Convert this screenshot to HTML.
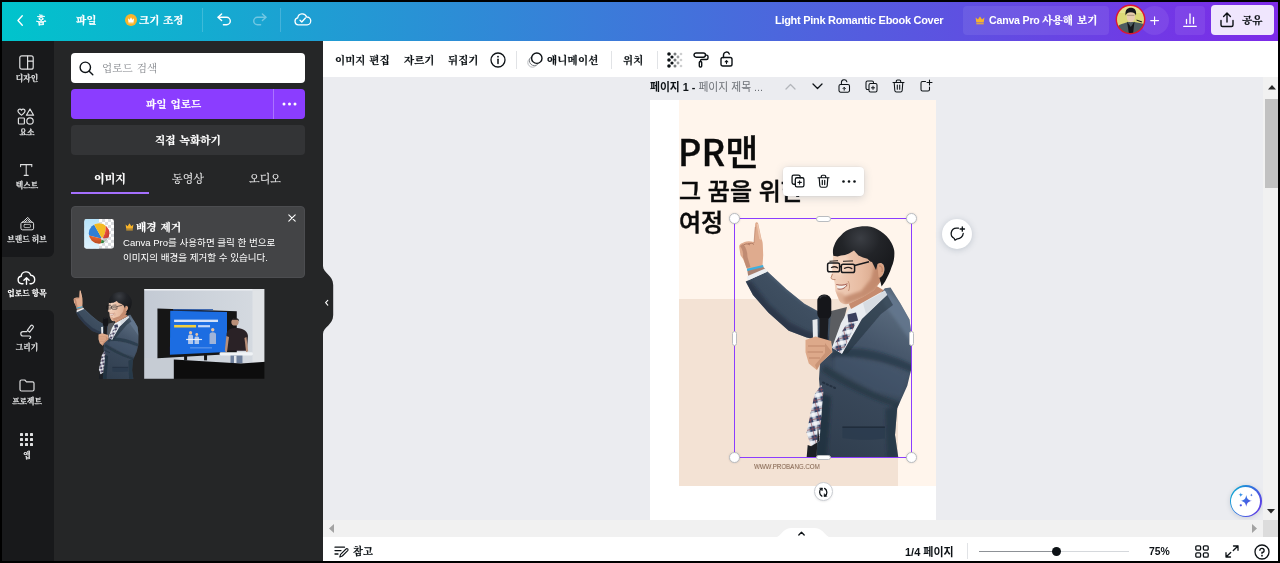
<!DOCTYPE html>
<html lang="ko">
<head>
<meta charset="utf-8">
<title>Light Pink Romantic Ebook Cover</title>
<style>
*{box-sizing:border-box;margin:0;padding:0}
html,body{width:1280px;height:563px;overflow:hidden;background:#000}
body{font-family:"Liberation Sans","Noto Sans CJK KR",sans-serif;position:relative;color:#0d1216}
.a{position:absolute}
.ser{font-family:"Liberation Sans","Noto Serif CJK SC","Noto Sans CJK KR",serif;word-spacing:1px;-webkit-text-stroke:.22px}
.nb{-webkit-text-stroke:0}
.rl{word-spacing:0!important}
.sans{font-family:"Liberation Sans","Noto Sans CJK KR",sans-serif}
#app{position:absolute;left:0;top:0;width:1280px;height:563px;background:#ebecf0;overflow:hidden}
.t,.rl{will-change:transform}
.t{position:absolute;white-space:nowrap;line-height:16px;height:16px}
svg{position:absolute;overflow:visible}
/* header */
#hdr{left:2px;top:2px;width:1276px;height:39px;background:linear-gradient(90deg,#00c4cc,#7d2ae8)}
#hdr .t{color:#fff;font-weight:700;font-size:10.6px}
.hdiv{position:absolute;top:6px;width:1px;height:24px;background:rgba(255,255,255,.18)}
/* rail */
#rail{left:2px;top:41px;width:51.500px;height:520px;background:#252627}
.rsec{position:absolute;left:0;width:51.500px;background:#18191b}
.rl{position:absolute;left:-11.3px;width:72px;text-align:center;color:#dfe0e1;font-size:7.7px;font-weight:700;line-height:10px;height:10px;white-space:nowrap}
/* panel */
#panel{left:53.500px;top:41px;width:269.500px;height:520px;background:#252627}
/* toolbar */
#tbar{left:323px;top:41px;width:955px;height:36px;background:#fff}
#tbar .t{font-size:10.5px;font-weight:700;color:#0d1216}
.tdiv{position:absolute;top:10px;width:1px;height:18px;background:#e1e3e6}
/* footer */
#foot{left:323px;top:537px;width:955px;height:24px;background:#fff}
</style>
</head>
<body>
<div id="app">
<svg width="0" height="0" style="left:0;top:0">
<defs>
<linearGradient id="jk" x1=".3" y1="0" x2="0" y2="1"><stop offset="0" stop-color="#57687b"/><stop offset=".22" stop-color="#46566a"/><stop offset=".5" stop-color="#39485a"/><stop offset="1" stop-color="#2f3d4d"/></linearGradient><linearGradient id="jk2" x1="1" y1="0" x2="0" y2="1"><stop offset="0" stop-color="#48596c"/><stop offset="1" stop-color="#324152"/></linearGradient>
<linearGradient id="sk" x1="0" y1="0" x2="1" y2="0"><stop offset="0" stop-color="#f3d3bf"/><stop offset=".6" stop-color="#e7bba1"/><stop offset="1" stop-color="#d3a083"/></linearGradient>
<radialGradient id="hr" cx=".45" cy=".2" r=".7"><stop offset="0" stop-color="#3b3e44"/><stop offset=".45" stop-color="#222428"/><stop offset="1" stop-color="#17181b"/></radialGradient>
<filter id="bl" x="-20%" y="-20%" width="140%" height="140%"><feGaussianBlur stdDeviation="1.6"/></filter>
<filter id="bs" x="-20%" y="-20%" width="140%" height="140%"><feGaussianBlur stdDeviation=".7"/></filter>
<pattern id="plaid" width="9" height="9" patternUnits="userSpaceOnUse" patternTransform="rotate(-14)"><rect width="9" height="9" fill="#36466a"/><rect x="0" y="0" width="9" height="3.800" fill="#dfe4ec"/><rect x="0" y="0" width="3.600" height="9" fill="#cdd4df" opacity=".9"/><rect x="0" y="0" width="3.600" height="3.800" fill="#f1f3f7"/><rect x="6" y="0" width=".8" height="9" fill="#8d4a55" opacity=".75"/><rect x="0" y="6.200" width="9" height=".8" fill="#8d4a55" opacity=".75"/></pattern>
<clipPath id="cB"><path d="M149.900 69.200 155.500 68.500 165.600 84.800 174.500 100.500 177 120 176.500 149 172.300 166.800 162.200 189.200 160 216 163.400 239H81.700L82.800 204.800 85 171.300 84 160 85 144.400 97.300 133.200 96 122 100.700 96 121 101.600z"/></clipPath>
<clipPath id="cA"><path d="M32.400 52.500 51.500 70.300 69.400 84.800 84 92.700 100 96 96 124 71.600 118.400 53.700 111.700 33.500 93.800 17.900 75.900 10.700 62.400z"/></clipPath>
<clipPath id="cF"><path d="M99 30C97.500 40 97.800 48 97 54L95.800 58.500C95.600 60 97.500 60.800 99 61L99.700 64 100.400 72 104 81C106 85 110 86 114 84.800L128 78 138.700 71.400 146 62 147.500 50 142 36 120 24 104 28z"/></clipPath>
<symbol id="man" viewBox="0 0 177 239" overflow="visible">
  <!-- raised arm sleeve -->
  <path d="M32.400 52.500 51.500 70.300 69.400 84.800 84 92.700 100 96 96 124 71.600 118.400 53.700 111.700 33.500 93.800 17.900 75.900 10.700 62.400z" fill="url(#jk2)"/>
  <g clip-path="url(#cA)" filter="url(#bl)">
    <path d="M8 64 30 94 54 114 74 122 96 128V118L72 112 54 103 34 85 16 62z" fill="#1e2c3b" opacity=".55"/>
    <path d="M30 52 52 72 70 86 84 93 84 88 68 79 50 64 36 50z" fill="#5b7088" opacity=".5"/>
  </g>
  <!-- cuff -->
  <path d="M12.200 50.500 27.500 47 30.200 50 13.300 58z" fill="#a88272"/>
  <path d="M12 57.200 30.300 49.400 32.300 52.800 12.600 61.500z" fill="#eceff2"/>
  <!-- hand + finger -->
  <path d="M20.200 5C20.300 2.500 22.900 2.500 23.300 5L26.500 20C27.500 22 27.800 24 27.800 26L28.200 36 27.500 47 12.200 50.500 8.200 40.300 5.500 36.300 4.200 28C4 26 5.500 24.500 7.500 24L9.500 23C12 22 15 22 19 23z" fill="#dfab8e"/>
  <g filter="url(#bs)"><path d="M5 27C7.500 30 8.500 34 8 38L11.500 49 15.500 48 12.500 38C12.500 33 11 28 8 25z" fill="#b47d66" opacity=".7"/><path d="M21.600 5 24.300 20 26.300 21 23 5z" fill="#f0cbb3" opacity=".8"/><path d="M8.500 26C11 24.500 13 24.500 15 26M13 25C15.500 23.800 17.500 24 19 25.500" fill="none" stroke="#a9735c" stroke-width=".9"/><path d="M19 24 20.300 8" stroke="#b47d66" stroke-width="1" fill="none" opacity=".6"/></g>
  <path d="M11.800 49.700 28 45.900 28.500 48 12.400 52z" fill="#3eb0e0"/>
  <!-- body jacket -->
  <path d="M149.900 69.200 155.500 68.500 165.600 84.800 174.500 100.500 177 120 176.500 149 172.300 166.800 162.200 189.200 160 216 163.400 239H81.700L82.800 204.800 85 171.300 84 160 85 144.400 97.300 133.200 96 122 100.700 96 121 101.600z" fill="url(#jk)"/>
  <g clip-path="url(#cB)" filter="url(#bl)">
    <path d="M150 70 168 86 177 104V124L160 100 148 84z" fill="#6a7f96" opacity=".6"/>
    <path d="M97 133C118 124 150 132 178 146V154C150 142 118 134 96 140z" fill="#1c2937" opacity=".5"/>
    <path d="M86 152C108 168 140 182 166 190L168 184C142 176 110 160 90 146z" fill="#1d2a38" opacity=".45"/>
    <path d="M100 136 150 146 172 156 166 178 140 172 100 150z" fill="#465b71" opacity=".4"/>
    <path d="M82 172 96 178 92 239H80z" fill="#1e2c3b" opacity=".7"/>
    <path d="M150 190 164 186 162 239H152z" fill="#223040" opacity=".6"/>
  </g>
  <path d="M107.400 208.200H149.900V219.500C135 221.500 120 221 107.400 219z" fill="#2a3b4d" opacity=".8"/>
  <path d="M107.400 208.200H149.900" stroke="#1c2836" stroke-width="1.300" fill="none"/>
  <path d="M88 163.500 100 169" stroke="#1c2836" stroke-width="2" stroke-linecap="round" stroke-dasharray="1.500 2.500" fill="none" opacity=".7"/>
  <!-- inner dark grey -->
  <path d="M96 92 112 88 108 104 98 126 94 121z" fill="#5b5d61"/>
  <!-- shirt + collar -->
  <path d="M114 90 149.900 71.400 152.200 75.900 127 100 107 135 97 128.500 106 104z" fill="#e9ecf0"/>
  <path d="M128 84 150 72 152 76 131 95z" fill="#cfd5dc" opacity=".7"/>
  <!-- neck -->
  <path d="M112 80 140 66 149 71.500 116 90z" fill="#c68b6e"/>
  <!-- tie -->
  <path d="M112.500 95.500 121 93.500 123.200 101.500 113.500 104.500z" fill="#3a3f5c"/>
  <path d="M112.500 103.500 121.500 102.500 107 134.500 97 129z" fill="url(#plaid)"/>
  <path d="M86.100 165.700 88.400 171.300 84.500 222 76.100 227.200 71.600 213.800 79.400 175.700z" fill="url(#plaid)"/>
  <path d="M72.700 226 76.100 227.200 84.500 222 82.800 205 81.700 239H71.600z" fill="#1b1f25"/>
  <g clip-path="url(#cB)" filter="url(#bs)"><path d="M152.200 75.900 127 100 107 135 113 134 146 95 158 86z" fill="#222e3a" opacity=".55"/></g>
  <!-- mic -->
  <path d="M77.500 101 82.500 100 82.800 119.500 78 119z" fill="#e6e9ec"/>
  <rect x="82.300" y="75.500" width="14" height="25.500" rx="6.500" fill="#15161a"/>
  <path d="M84.500 99H93.500L92.500 122H84.500z" fill="#1b1c20"/>
  <path d="M85 79C86 77 89 76.500 91 77" stroke="#3a3c42" stroke-width="1.200" fill="none" stroke-linecap="round"/>
  <!-- hand holding mic -->
  <path d="M70.500 121 80.500 117.500 96.200 122 97.300 133.200 85 144.400 81.700 151.100 73.800 144.400 70.500 133.200z" fill="#dda98a"/>
  <g filter="url(#bs)"><path d="M73 127H90M72.500 133H88M74 139H85" stroke="#b47c62" stroke-width="1.100" fill="none" opacity=".75"/><path d="M90 124 97 133 86 144 82 151 80 146 90 134z" fill="#c18a6e" opacity=".7"/></g>
  <!-- face -->
  <path d="M99 30C97.500 40 97.800 48 97 54L95.800 58.500C95.600 60 97.500 60.800 99 61L99.700 64 100.400 72 104 81C106 85 110 86 114 84.800L128 78 138.700 71.400 146 62 147.500 50 142 36 120 24 104 28z" fill="url(#sk)"/>
  <g clip-path="url(#cF)" filter="url(#bl)">
    <path d="M110 86 130 78 140 71 147 61 148 48 140 44 136 60 126 72 108 78z" fill="#bd8366" opacity=".8"/>
    <path d="M100 38 112 36 116 50 104 58 98 54z" fill="#f6d7c2" opacity=".8"/>
    <path d="M99 72 108 74 114 84 104 84z" fill="#d49e82" opacity=".6"/>
  </g>
  <path d="M142.300 45C146 42.500 149.800 45 149.400 50.500 149 55.500 146 59 143.500 58z" fill="#d9a283"/>
  <path d="M144 47C146.500 46.500 147.800 49 147 53" stroke="#b57c62" stroke-width=".9" fill="none"/>
  <path d="M97.500 55 96 58.800C96 60 98 60.800 100.500 60.600" stroke="#b98267" stroke-width=".9" fill="none"/>
  <path d="M101.800 66C105 67 109 67 112 65.500 110.500 69 106 70.500 102.500 69.500z" fill="#f4f1ed"/>
  <path d="M101.300 65.500C105 66.500 109 66.300 112.500 64.800M102.500 69.800C106 71 110 69.500 112 66" fill="none" stroke="#9a5148" stroke-width=".9"/>
  <path d="M113 62C115 65 115 69 113.500 72" stroke="#c48d72" stroke-width=".9" fill="none"/>
  <!-- eyes -->
  <path d="M96.500 48.500C98.500 47.500 101 47.700 102.500 48.800M109.500 49.300C112 48 115 48.300 116.800 49.600" stroke="#2a211f" stroke-width="1.300" fill="none" stroke-linecap="round"/>
  <!-- hair -->
  <path d="M98.300 36.800C97.500 32 98 29 99 26.900 100.500 22 103 19 105.400 16.900 109 12.500 113 10.500 118.200 9.100 123 7.500 128 7 132.400 7.300 137 7.800 141.500 9.500 145.200 12 150 15 154 19 156.500 24 158.500 28 159.500 31 159.400 34 159.500 39 158.500 44 156.500 48.200 155 53 152.500 58 150.100 62.400L146.600 67.400 144.500 59C147 58 149.500 54 149.400 50 149.500 45 146 42.500 142.500 45L141 51 137 43 135.200 42.500 132.400 39.700 128 38.500 123.500 36.500 119 31.500 114 34.500 110 36 106 36.500 102.500 37.500z" fill="url(#hr)"/>
  <!-- glasses -->
  <rect x="92.600" y="44" width="12" height="8.800" rx="1.800" fill="none" stroke="#17181b" stroke-width="1.500"/>
  <rect x="106.300" y="45.200" width="13.300" height="8.300" rx="1.800" fill="none" stroke="#17181b" stroke-width="1.500"/>
  <path d="M104.600 47.500 106.300 47.800M119.600 46.500 134 42.800" stroke="#17181b" stroke-width="1.500" fill="none"/>
  <path d="M94.500 42.300 103 41.600M108 42.300 118 41.800" stroke="#2a2422" stroke-width="1.200" fill="none" opacity=".8"/>
</symbol>
</defs>
</svg>

<div id="hdr" class="a">
  <svg style="left:15px;top:12.500px" width="6.500" height="11.400" viewBox="0 0 8 14" fill="none" stroke="#fff" stroke-width="1.700" stroke-linecap="round" stroke-linejoin="round"><path d="M6.5 1 1.2 6.8 6.5 12.6"/></svg>
  <div class="t ser" style="left:34px;top:10px">홈</div>
  <div class="t ser" style="left:74px;top:10px">파일</div>
  <svg style="left:122.800px;top:12px" width="12" height="12" viewBox="0 0 13 13"><circle cx="6.5" cy="6.5" r="6.5" fill="#f9b42a"/><path d="M3.2 4.6 5 6.2 6.5 3.6 8 6.2 9.8 4.6 9.3 8.6H3.7z" fill="#fff"/><rect x="3.7" y="9.1" width="5.6" height=".9" fill="#fff"/></svg>
  <div class="t ser" style="left:137.400px;top:10px;word-spacing:.5px">크기 조정</div>
  <div class="hdiv" style="left:200px"></div>
  <svg style="left:215px;top:11px" width="15" height="13" viewBox="0 0 15 13" fill="none" stroke="#fff" stroke-width="1.4" stroke-linecap="round" stroke-linejoin="round"><path d="M4.6 1 1 4.3 4.6 7.6"/><path d="M1.3 4.3H9.6a3.7 3.7 0 0 1 0 7.4H6.4"/></svg>
  <svg style="left:250px;top:11px;opacity:.38" width="15" height="13" viewBox="0 0 15 13" fill="none" stroke="#fff" stroke-width="1.4" stroke-linecap="round" stroke-linejoin="round"><path d="M10.4 1 14 4.3 10.4 7.6"/><path d="M13.7 4.3H5.4a3.7 3.7 0 0 0 0 7.4H8.6"/></svg>
  <div class="hdiv" style="left:278px"></div>
  <svg style="left:291.700px;top:10.200px" width="17" height="14" viewBox="0 0 17 14" fill="none" stroke="#fff" stroke-width="1.3" stroke-linecap="round" stroke-linejoin="round"><path d="M4.3 12.8a3.5 3.5 0 0 1-.6-6.9 4.6 4.6 0 0 1 8.9-.9 3.9 3.9 0 0 1 .5 7.8z"/><path d="M6 8.2 7.8 10 11.4 6"/></svg>
  <div class="t sans" style="left:773px;top:10px;font-size:11px;letter-spacing:-.29px">Light Pink Romantic Ebook Cover</div>
  <div class="a" style="left:961px;top:4px;width:146px;height:29px;border-radius:4px;background:rgba(255,255,255,.08)"></div>
  <svg style="left:973px;top:14px" width="10" height="9" viewBox="0 0 10 9"><path d="M.6 1.6 2.9 3.6 5 .4 7.100 3.600 9.4 1.600 8.700 6.600H1.300z" fill="#f9b42a"/><rect x="1.300" y="7.200" width="7.400" height="1.100" fill="#f9b42a"/></svg>
  <div class="t" style="left:987px;top:10px"><span class="sans" style="letter-spacing:-.2px">Canva Pro </span><span class="ser">사용해 보기</span></div>
  <div class="a" style="left:1138px;top:4px;width:29px;height:29px;border-radius:50%;background:rgba(255,255,255,.08)"></div>
  <svg style="left:1148px;top:13.700px" width="9.200" height="9.200" viewBox="0 0 11 11" stroke="#fff" stroke-width="1.3" stroke-linecap="round"><path d="M5.500 .8V10.200M.8 5.500H10.200"/></svg>
  <svg style="left:1112.800px;top:2.400px" width="31" height="31" viewBox="0 0 31 31">
    <defs><clipPath id="avc"><circle cx="15.500" cy="15.500" r="13.500"/></clipPath><filter id="avb"><feGaussianBlur stdDeviation=".45"/></filter></defs>
    <circle cx="15.500" cy="15.500" r="14.900" fill="#e0162f"/>
    <g clip-path="url(#avc)"><g filter="url(#avb)">
      <rect width="31" height="31" fill="#dcd978"/>
      <rect x="0" y="0" width="31" height="9" fill="#e6e28e"/>
      <path d="M1 31 3.800 21.200C8 19.500 11 18.600 13 18H19C22 18.500 25 19.200 28 19.800L30 31z" fill="#4d5c61"/>
      <path d="M12 17.500 15.800 23 19.500 17.500 18 30H14z" fill="#15181a"/>
      <path d="M21.500 15.500 27.200 17.600 26.500 18.600 21.500 16.600z" fill="#1c1f1f"/>
      <ellipse cx="15.800" cy="12.800" rx="4.200" ry="5.400" fill="#e9cdb0"/>
      <path d="M10.600 11.500C9.800 6 12.500 3.800 15.800 3.800 19.500 3.800 21.800 6.200 21 11.500 20.200 9 18.500 8.200 15.800 8.200S11.500 9 10.600 11.500z" fill="#17181b"/>
      <path d="M12.200 11.300H19.400" stroke="#6c5a4c" stroke-width=".7" opacity=".7"/>
    </g></g>
  </svg>
  <div class="a" style="left:1173px;top:4px;width:30px;height:29px;border-radius:4px;background:rgba(255,255,255,.08)"></div>
  <svg style="left:1181px;top:11px" width="14" height="14" viewBox="0 0 14 14" stroke="#fff" stroke-width="1.300" stroke-linecap="round" fill="none"><path d="M.7 13.300H13.300M3.500 10.500V6.500M7 10.500V1M10.500 10.500V4.500"/></svg>
  <div class="a" style="left:1209px;top:3px;width:63px;height:30px;border-radius:4px;background:#efe6fd"></div>
  <svg style="left:1218px;top:10px" width="14" height="16" viewBox="0 0 14 16" fill="none" stroke="#0d1216" stroke-width="1.400" stroke-linecap="round" stroke-linejoin="round"><path d="M7 10V1.200M3.600 4.400 7 1 10.400 4.400"/><path d="M1 8.500V13a1.500 1.500 0 0 0 1.500 1.500h9A1.500 1.500 0 0 0 13 13V8.500"/></svg>
  <div class="t ser" style="left:1240px;top:10px;color:#0d1216">공유</div>
</div>

<div id="rail" class="a">
  <div class="rsec" style="top:0;height:216px;border-radius:0 0 6px 0"></div>
  <div class="rsec" style="top:269px;height:251px;border-radius:0 6px 0 0"></div>
  <!-- design -->
  <svg style="left:17.0px;top:14px" width="15" height="15" viewBox="0 0 15 15" fill="none" stroke="#dfe0e1" stroke-width="1.200"><rect x=".8" y=".8" width="13.400" height="13.400" rx="2"/><path d="M8.600 .8V14.200M8.600 6.200H14.200"/></svg>
  <div class="rl ser" style="top:32.5px">디자인</div>
  <!-- elements -->
  <svg style="left:15.0px;top:67px" width="18" height="17" viewBox="0 0 18 17" fill="none" stroke="#dfe0e1" stroke-width="1.200" stroke-linejoin="round"><path d="M4.500 7.200C2.500 5.700 1 4.600 1 3.100 1 1.900 1.900 1.200 2.900 1.200c.7 0 1.300.4 1.600 1 .3-.6.900-1 1.600-1C7.100 1.200 8 1.900 8 3.100 8 4.600 6.500 5.700 4.500 7.200z"/><path d="M13 1 16.600 7.200H9.400z"/><rect x="1.400" y="10" width="6" height="6" rx=".8"/><circle cx="13" cy="13" r="3.200"/></svg>
  <div class="rl ser" style="top:86.5px">요소</div>
  <!-- text -->
  <svg style="left:18.3px;top:123.2px" width="12.4" height="12" viewBox="0 0 12.4 12" fill="none" stroke="#dfe0e1" stroke-width="1.05" stroke-linecap="round"><path d="M.6 2.600V.6H11.800V2.600M6.200 .6V11.400M4.200 11.400H8.200"/></svg>
  <div class="rl ser" style="top:139.5px">텍스트</div>
  <!-- brand hub -->
  <svg style="left:17.6px;top:174.5px" width="14.5" height="15" viewBox="0 0 16 16" fill="none" stroke="#dfe0e1" stroke-width="1.100" stroke-linejoin="round" stroke-linecap="round"><path d="M3 6.500 8.500 1.200 13 6.500"/><path d="M5.300 6.500 8.600 3.500 11 6.500"/><rect x="1" y="6.500" width="14" height="8.500" rx="1.800"/><rect x="4.500" y="9" width="7" height="3.500" rx=".8" stroke-width=".8"/></svg>
  <div class="rl ser" style="top:193.5px">브랜드 허브</div>
  <!-- uploads -->
  <svg style="left:15.0px;top:229px" width="19" height="15" viewBox="0 0 19 15" fill="none" stroke="#fff" stroke-width="1.400" stroke-linecap="round" stroke-linejoin="round"><path d="M6 13.800H4.700a3.800 3.800 0 0 1-.6-7.500 5 5 0 0 1 9.700-1 4.300 4.300 0 0 1 .4 8.500H13"/><path d="M9.500 14.200V8M6.900 10.300 9.500 7.700 12.100 10.300"/></svg>
  <div class="rl ser" style="top:247.5px;color:#fff">업로드 항목</div>
  <!-- draw -->
  <svg style="left:17.0px;top:283px" width="15" height="15" viewBox="0 0 15 15" fill="none" stroke="#dfe0e1" stroke-width="1.200" stroke-linecap="round" stroke-linejoin="round"><path d="M8.300 6.300 11.800 1.700a1.500 1.500 0 0 1 2.300 1.900L10.600 8.100z"/><path d="M8 7.600H4a2.200 2.200 0 0 0 0 4.400H10.500a1.200 1.200 0 0 1 0 2.400"/></svg>
  <div class="rl ser" style="top:301.5px">그리기</div>
  <!-- projects -->
  <svg style="left:17.0px;top:338px" width="16" height="13" viewBox="0 0 16 13" fill="none" stroke="#dfe0e1" stroke-width="1.200" stroke-linejoin="round"><path d="M1 2.500A1.500 1.500 0 0 1 2.500 1H5.800L7.500 2.800H13.500A1.500 1.500 0 0 1 15 4.300V10.500A1.500 1.500 0 0 1 13.500 12H2.500A1.500 1.500 0 0 1 1 10.500z"/></svg>
  <div class="rl ser" style="top:355.5px">프로젝트</div>
  <!-- apps -->
  <svg style="left:17.0px;top:391px" width="15" height="15" viewBox="0 0 15 15" fill="#dfe0e1"><rect x="1" y="1" width="3" height="3" rx=".6"/><rect x="6" y="1" width="3" height="3" rx=".6"/><rect x="11" y="1" width="3" height="3" rx=".6"/><rect x="1" y="6" width="3" height="3" rx=".6"/><rect x="6" y="6" width="3" height="3" rx=".6"/><rect x="11" y="6" width="3" height="3" rx=".6"/><rect x="1" y="11" width="3" height="3" rx=".6"/><rect x="6" y="11" width="3" height="3" rx=".6"/><rect x="11" y="11" width="3" height="3" rx=".6"/></svg>
  <div class="rl ser" style="top:409.5px">앱</div>
</div>

<div id="panel" class="a">
  <!-- search -->
  <div class="a" style="left:17.5px;top:12px;width:234px;height:30px;border-radius:4px;background:#fff"></div>
  <svg style="left:25.5px;top:20px" width="15" height="15" viewBox="0 0 15 15" fill="none" stroke="#0d1216" stroke-width="1.400" stroke-linecap="round"><circle cx="6.300" cy="6.300" r="5.200"/><path d="M10.200 10.200 13.800 13.800"/></svg>
  <div class="t ser nb" style="left:48.5px;top:19px;font-size:10.6px;color:#85888d">업로드 검색</div>
  <!-- upload button -->
  <div class="a" style="left:17.5px;top:48px;width:234px;height:30px;border-radius:4px;background:#8b3dff"></div>
  <div class="a" style="left:219.5px;top:48px;width:1px;height:30px;background:rgba(255,255,255,.28)"></div>
  <div class="t ser" style="left:92.5px;top:55px;font-size:10.6px;font-weight:700;color:#fff">파일 업로드</div>
  <svg style="left:228.5px;top:61px" width="15" height="4" viewBox="0 0 15 4" fill="#fff"><circle cx="2" cy="2" r="1.500"/><circle cx="7.500" cy="2" r="1.500"/><circle cx="13" cy="2" r="1.500"/></svg>
  <!-- record button -->
  <div class="a" style="left:17.5px;top:84px;width:234px;height:30px;border-radius:4px;background:#333436"></div>
  <div class="t ser" style="left:101.5px;top:91px;font-size:10.7px;font-weight:700;color:#fff">직접 녹화하기</div>
  <!-- tabs -->
  <div class="t ser" style="left:40.5px;top:130px;font-size:11px;font-weight:700;color:#fff">이미지</div>
  <div class="t ser" style="left:118.5px;top:130px;font-size:11px;color:#eeeeef;-webkit-text-stroke:.1px">동영상</div>
  <div class="t ser" style="left:195.5px;top:130px;font-size:11px;color:#eeeeef;-webkit-text-stroke:.1px">오디오</div>
  <div class="a" style="left:17.5px;top:151px;width:78px;height:2px;background:#a570ff"></div>
  <!-- card -->
  <div class="a" style="left:17.5px;top:165px;width:234px;height:72px;border-radius:4px;background:#434446;border:1px solid #4c4d50"></div>
  <svg style="left:30.5px;top:178px" width="30.200" height="29.800" viewBox="0 0 30 30">
    <defs><clipPath id="bbc"><rect width="30" height="30" rx="2.500"/></clipPath><clipPath id="bbb"><circle cx="15" cy="14.600" r="10.400"/></clipPath>
    <pattern id="chk" width="6" height="6" patternUnits="userSpaceOnUse"><rect width="6" height="6" fill="#fff"/><rect width="3" height="3" fill="#d9dbde"/><rect x="3" y="3" width="3" height="3" fill="#d9dbde"/></pattern>
    <linearGradient id="sky" x1="0" y1="0" x2="0" y2="1"><stop offset="0" stop-color="#b7e3fa"/><stop offset="1" stop-color="#dff3fd"/></linearGradient>
    <radialGradient id="bsh" cx=".4" cy=".3" r=".75"><stop offset=".55" stop-color="#000" stop-opacity="0"/><stop offset="1" stop-color="#000" stop-opacity=".28"/></radialGradient></defs>
    <g clip-path="url(#bbc)">
      <rect width="30" height="30" fill="url(#chk)"/>
      <rect width="14.800" height="30" fill="url(#sky)"/>
      <g clip-path="url(#bbb)">
        <rect width="30" height="30" fill="#f0f0ee"/>
        <path d="M18 20 9.900 5.600 2 4 2 16 4.800 16.600z" fill="#2f7fd6"/>
        <path d="M18 20 9.900 5.600 14 2 22 4 21.600 7.200C22 12 20.500 16.500 18 20z" fill="#f4bb25"/>
        <path d="M18 20C20.500 16.500 22 12 21.600 7.200L27 8 27 19 23.600 18.900z" fill="#ee4b3c"/>
        <path d="M18 20 4.800 16.600 3 22 10 27 16.600 25z" fill="#e8622c"/>
        <path d="M18 20 16.600 25 21 24z" fill="#3fa650"/>
        <circle cx="18.200" cy="20" r="1.300" fill="#eef0f2"/>
        <circle cx="15" cy="14.600" r="10.400" fill="url(#bsh)"/>
      </g>
    </g>
  </svg>
  <svg style="left:71.5px;top:182px" width="9" height="8" viewBox="0 0 10 9"><path d="M.6 1.600 2.900 3.600 5 .4 7.100 3.600 9.400 1.600 8.700 6.600H1.300z" fill="#f9b42a"/><rect x="1.300" y="7.200" width="7.400" height="1.100" fill="#f9b42a"/></svg>
  <div class="t ser" style="left:82.5px;top:178px;font-size:10.7px;font-weight:700;color:#fff">배경 제거</div>
  <div class="t sans" style="left:69.5px;top:193.700px;font-size:9.55px;color:#fff">Canva Pro를 사용하면 클릭 한 번으로</div>
  <div class="t sans" style="left:69.5px;top:208.700px;font-size:9.55px;color:#fff">이미지의 배경을 제거할 수 있습니다.</div>
  <svg style="left:234.5px;top:173px" width="8" height="8" viewBox="0 0 8 8" stroke="#fff" stroke-width="1.100" stroke-linecap="round"><path d="M.8 .8 7.200 7.200M7.200 .8 .8 7.200"/></svg>
  <!-- thumbs -->
  <svg style="left:18.5px;top:248px" width="66.500" height="90" viewBox="0 0 177 239"><use href="#man"/></svg>
  <svg style="left:90.5px;top:248.300px" width="120.600" height="89.800" viewBox="0 0 120.500 90">
    <defs><clipPath id="pvc"><rect width="120.500" height="90"/></clipPath><filter id="pvb" x="-5%" y="-5%" width="110%" height="110%"><feGaussianBlur stdDeviation=".45"/></filter>
    <linearGradient id="wall" x1="0" y1="0" x2="1" y2="0"><stop offset="0" stop-color="#c3cad4"/><stop offset="1" stop-color="#d6dbe1"/></linearGradient></defs>
    <g clip-path="url(#pvc)"><g filter="url(#pvb)">
    <rect x="-2" y="-2" width="125" height="94" fill="url(#wall)"/>
    <rect x="-2" y="-2" width="125" height="3.500" fill="#eceff3"/>
    <rect x="108.500" y="0" width="14" height="74" fill="#e0e3e6"/>
    <rect x="-2" y="69" width="32" height="23" fill="#c6ccd4"/>
    <path d="M13.300 19.500 92.800 22.200V64.900L13.300 69.300z" fill="#131418"/>
    <path d="M26.100 21.700 83 23.100V63.100L25.800 65.800z" fill="#1a6de2"/>
    <rect x="29" y="20.200" width="40" height="1.200" fill="#2a59a8"/>
    <rect x="30" y="30.700" width="44" height="2.400" fill="#e4ecfb" opacity=".92"/>
    <rect x="30" y="36" width="22" height="2.600" fill="#f3cf3a"/>
    <rect x="54" y="36.200" width="12" height="2.200" fill="#dfe9fb" opacity=".85"/>
    <path d="M44 55V47.500C44 45 49 45 49 47.500V55zM50.500 55V49C50.500 47 55 47 55 49V55z" fill="#cfd9ee" opacity=".85"/><circle cx="46.500" cy="43.800" r="1.600" fill="#e8c4a4"/><circle cx="52.700" cy="45.600" r="1.400" fill="#e8c4a4"/>
    <path d="M65.500 55V45.500C65.500 42.500 72 42.500 72 45.500V55z" fill="#aebbd8" opacity=".9"/><circle cx="68.700" cy="40.800" r="1.700" fill="#e8c4a4"/>
    <rect x="42" y="50" width="16" height="1.200" fill="#f3f5f9" opacity=".9"/>
    <rect x="46" y="58.500" width="22" height="1" fill="#8fb4f0" opacity=".7"/>
    <rect x="40" y="66" width="3" height="5.500" fill="#131418"/><rect x="60" y="65" width="3" height="6.500" fill="#131418"/>
    <circle cx="91" cy="33" r="3.700" fill="#b98f78"/>
    <path d="M86.800 32.500C86.300 28 95.700 28 95.200 32.500L94 30.800H88z" fill="#15161a"/>
    <path d="M82.500 46C82.500 40.500 87 39 91.500 39S103.500 40.500 104 47L103 62H83.500z" fill="#2a2126"/>
    <path d="M82.300 47 80.800 62.500 83 63.500 85 48z" fill="#b98f78"/><path d="M102.500 48 104.200 62.500 102.200 63.500 100.500 49z" fill="#b98f78"/>
    <rect x="86.500" y="66" width="12" height="8.500" fill="#6d7f9c"/>
    <rect x="75.500" y="63.500" width="33.500" height="3.200" rx="1.500" fill="#f0f3f6"/>
    <rect x="90" y="66.700" width="2.500" height="7.500" fill="#e2e6ea"/>
    <path d="M29.700 70.700 97 74.700 122 73V92H29.700z" fill="#0b0c0e"/>
    </g></g>
  </svg>
  <!-- collapse handle -->
  <svg style="left:269.500px;top:225px" width="11" height="68" viewBox="0 0 11 68"><path d="M0 0C0 7 10.200 9 10.200 19V49C10.200 59 0 61 0 68z" fill="#252627"/><path d="M4.800 34.300 2.600 36.700 4.800 39.100" fill="none" stroke="#fff" stroke-width="1.100" stroke-linecap="round" stroke-linejoin="round"/></svg>
</div>

<div id="tbar" class="a">
  <div class="t ser" style="left:12.300px;top:11px">이미지 편집</div>
  <div class="t ser" style="left:81px;top:11px">자르기</div>
  <div class="t ser" style="left:125px;top:11px">뒤집기</div>
  <svg style="left:167px;top:11px" width="16" height="16" viewBox="0 0 16 16" fill="none" stroke="#0d1216" stroke-width="1.300"><circle cx="8" cy="8" r="7"/><path d="M8 7.200V11.500" stroke-linecap="round" stroke-width="1.500"/><circle cx="8" cy="4.700" r=".9" fill="#0d1216" stroke="none"/></svg>
  <div class="tdiv" style="left:193px"></div>
  <svg style="left:204px;top:11px" width="16" height="16" viewBox="0 0 16 16" fill="#fff"><circle cx="5.500" cy="10.500" r="4.700" stroke="#b9bcc0" stroke-width="1"/><circle cx="7.300" cy="8.700" r="4.900" stroke="#7d8186" stroke-width="1"/><circle cx="9.800" cy="6.200" r="5.200" stroke="#0d1216" stroke-width="1.400"/></svg>
  <div class="t ser" style="left:224.300px;top:11px;letter-spacing:.15px">애니메이션</div>
  <div class="tdiv" style="left:288px"></div>
  <div class="t ser" style="left:300px;top:11px">위치</div>
  <div class="tdiv" style="left:334px"></div>
  <svg style="left:343.500px;top:10.800px" width="16" height="16" viewBox="0 0 16 16" fill="#0d1216"><g><circle cx="2" cy="2" r="1.800"/><circle cx="2" cy="8" r="1.800"/><circle cx="2" cy="14" r="1.800"/><circle cx="5" cy="5" r="1.600"/><circle cx="5" cy="11" r="1.600"/></g><g opacity=".55"><circle cx="8" cy="2" r="1.500"/><circle cx="8" cy="8" r="1.500"/><circle cx="8" cy="14" r="1.500"/></g><g opacity=".38"><circle cx="11" cy="5" r="1.400"/><circle cx="11" cy="11" r="1.400"/></g><g opacity=".2"><circle cx="14" cy="2" r="1.300"/><circle cx="14" cy="8" r="1.300"/><circle cx="14" cy="14" r="1.300"/></g></svg>
  <svg style="left:370px;top:11px" width="16" height="16" viewBox="0 0 16 16" fill="none" stroke="#0d1216" stroke-width="1.400" stroke-linejoin="round" stroke-linecap="round"><rect x="1" y="1" width="11.500" height="4.200" rx="2.100"/><path d="M12.500 3.100H13.500A1.500 1.500 0 0 1 15 4.600V6A1.500 1.500 0 0 1 13.500 7.500H8.700A1.200 1.200 0 0 0 7.500 8.700V9.500"/><rect x="6.300" y="9.500" width="2.400" height="5.500" rx="1"/></svg>
  <svg style="left:397px;top:10px" width="13" height="16" viewBox="0 0 13 16" fill="none" stroke="#0d1216" stroke-width="1.400" stroke-linecap="round" stroke-linejoin="round"><rect x="1" y="6.500" width="11" height="8.500" rx="1.800"/><path d="M3.500 6.500V4A3 3 0 0 1 9.300 3"/><path d="M6.500 12.600V9.800M5.200 10.900 6.500 9.600 7.800 10.900" stroke-width="1.100"/></svg>
</div>

<div id="stage" class="a" style="left:323px;top:77px;width:940px;height:442.500px;overflow:hidden">
  <!-- page title row -->
  <div class="t sans" style="left:327px;top:2px;font-size:10.8px;font-weight:700;color:#0d1216">페이지 1 - <span style="font-weight:400;color:#6b6f75">페이지 제목 ...</span></div>
  <svg style="left:462px;top:6px" width="11" height="7" viewBox="0 0 11 7" fill="none" stroke="#b3b6bb" stroke-width="1.300" stroke-linecap="round" stroke-linejoin="round"><path d="M1 6 5.500 1.500 10 6"/></svg>
  <svg style="left:489px;top:6px" width="11" height="7" viewBox="0 0 11 7" fill="none" stroke="#0d1216" stroke-width="1.300" stroke-linecap="round" stroke-linejoin="round"><path d="M1 1 5.500 5.500 10 1"/></svg>
  <svg style="left:515px;top:2px" width="13" height="14" viewBox="0 0 13 14" fill="none" stroke="#0d1216" stroke-width="1.050" stroke-linecap="round" stroke-linejoin="round"><rect x="1" y="5.500" width="10.500" height="7.700" rx="1.600"/><path d="M3.400 5.500V3.600A2.800 2.800 0 0 1 8.900 2.800"/><path d="M6.200 11.200V8.600M5 9.600 6.200 8.400 7.400 9.600" stroke-width="1"/></svg>
  <svg style="left:542px;top:3px" width="13" height="13" viewBox="0 0 13 13" fill="none" stroke="#0d1216" stroke-width="1.050" stroke-linecap="round" stroke-linejoin="round"><path d="M3.500 9.500H2.500A1.500 1.500 0 0 1 1 8V2.500A1.500 1.500 0 0 1 2.500 1H7A1.500 1.500 0 0 1 8.500 2.500V3.500"/><rect x="4" y="3.500" width="8" height="8.500" rx="1.500"/><path d="M8 6.200V9.400M6.400 7.800H9.600" stroke-width="1"/></svg>
  <svg style="left:569px;top:2px" width="13" height="14" viewBox="0 0 13 14" fill="none" stroke="#0d1216" stroke-width="1.050" stroke-linecap="round" stroke-linejoin="round"><path d="M1 3.500H12M4.300 3.500V2.200A1.200 1.200 0 0 1 5.500 1H7.500A1.200 1.200 0 0 1 8.700 2.200V3.500M2.200 3.500 2.800 11.500A1.700 1.700 0 0 0 4.500 13H8.500A1.700 1.700 0 0 0 10.200 11.500L10.800 3.500M5.300 6V10.300M7.700 6V10.300"/></svg>
  <svg style="left:597px;top:2px" width="13" height="13" viewBox="0 0 13 13" fill="none" stroke="#0d1216" stroke-width="1.050" stroke-linecap="round" stroke-linejoin="round"><path d="M5.500 2.500H2.500A1.500 1.500 0 0 0 1 4V10.500A1.500 1.500 0 0 0 2.500 12H8A1.500 1.500 0 0 0 9.500 10.500V8"/><path d="M9.500 1V6M7 3.500H12"/></svg>
  <!-- page -->
  <div class="a" style="left:327px;top:23px;width:286px;height:430px;background:#fff"></div>
  <div class="a" style="left:355.500px;top:23px;width:257.500px;height:385.500px;background:#fff5ec"></div>
  <div class="a" style="left:355.500px;top:222px;width:219.500px;height:186.500px;background:#f3e2d4"></div>
  <div class="t sans" style="left:354.800px;top:49px;font-family:'Noto Sans CJK KR',sans-serif;font-size:36px;line-height:48px;height:48px;font-weight:500;color:#0b0b0b;-webkit-text-stroke:.4px #0b0b0b;letter-spacing:.2px">PR맨</div>
  <div class="t sans" style="left:356px;top:98.200px;font-family:'Noto Sans CJK KR',sans-serif;font-size:24px;line-height:30.500px;height:auto;font-weight:500;-webkit-text-stroke:.45px #0b0b0b;color:#0b0b0b;white-space:normal;width:140px">그 꿈을 위한 여정</div>
  <div class="t sans" style="left:431px;top:385px;font-size:8px;line-height:10px;height:10px;color:#7a5a44;transform-origin:0 50%;transform:scaleX(.77)">WWW.PROBANG.COM</div>
  <!-- man -->
  <svg style="left:411.500px;top:141.700px" width="177" height="239" viewBox="0 0 177 239"><use href="#man"/></svg>
  <!-- selection -->
  <div class="a" style="left:410.700px;top:140.900px;width:178.700px;height:239.900px;border:1.600px solid #8b3dff"></div>
  <div class="a hd" style="left:406px;top:136.200px;width:11px;height:11px;border-radius:50%;background:#fff;border:1px solid #b9bcc0;box-shadow:0 0 2px rgba(0,0,0,.15)"></div>
  <div class="a hd" style="left:583.100px;top:136.200px;width:11px;height:11px;border-radius:50%;background:#fff;border:1px solid #b9bcc0;box-shadow:0 0 2px rgba(0,0,0,.15)"></div>
  <div class="a hd" style="left:406px;top:375px;width:11px;height:11px;border-radius:50%;background:#fff;border:1px solid #b9bcc0;box-shadow:0 0 2px rgba(0,0,0,.15)"></div>
  <div class="a hd" style="left:583.100px;top:375px;width:11px;height:11px;border-radius:50%;background:#fff;border:1px solid #b9bcc0;box-shadow:0 0 2px rgba(0,0,0,.15)"></div>
  <div class="a" style="left:493px;top:139px;width:14.500px;height:5.500px;border-radius:3px;background:#fff;border:1px solid #b9bcc0"></div>
  <div class="a" style="left:493px;top:377.800px;width:14.500px;height:5.500px;border-radius:3px;background:#fff;border:1px solid #b9bcc0"></div>
  <div class="a" style="left:408.800px;top:254px;width:5.500px;height:14.500px;border-radius:3px;background:#fff;border:1px solid #b9bcc0"></div>
  <div class="a" style="left:585.800px;top:254px;width:5.500px;height:14.500px;border-radius:3px;background:#fff;border:1px solid #b9bcc0"></div>
  <!-- floating toolbar -->
  <div class="a" style="left:460px;top:89.500px;width:81px;height:29.500px;border-radius:4px;background:#fff;box-shadow:0 0 0 .5px rgba(64,87,109,.07),0 2px 8px rgba(64,87,109,.22)"></div>
  <svg style="left:467.500px;top:97px" width="14" height="14" viewBox="0 0 13 13" fill="none" stroke="#0d1216" stroke-width="1.200" stroke-linecap="round" stroke-linejoin="round"><path d="M3.500 9.500H2.500A1.500 1.500 0 0 1 1 8V2.500A1.500 1.500 0 0 1 2.500 1H7A1.500 1.500 0 0 1 8.500 2.500V3.500"/><rect x="4" y="3.500" width="8" height="8.500" rx="1.500"/><path d="M8 6.200V9.400M6.400 7.800H9.600" stroke-width="1"/></svg>
  <svg style="left:494px;top:96.500px" width="13" height="14.500" viewBox="0 0 13 14" fill="none" stroke="#0d1216" stroke-width="1.200" stroke-linecap="round" stroke-linejoin="round"><path d="M1 3.500H12M4.300 3.500V2.200A1.200 1.200 0 0 1 5.500 1H7.500A1.200 1.200 0 0 1 8.700 2.200V3.500M2.200 3.500 2.800 11.500A1.700 1.700 0 0 0 4.500 13H8.500A1.700 1.700 0 0 0 10.200 11.500L10.800 3.500M5.300 6V10.300M7.700 6V10.300"/></svg>
  <svg style="left:519px;top:102.800px" width="14" height="3" viewBox="0 0 14 3" fill="#0d1216"><circle cx="1.500" cy="1.500" r="1.300"/><circle cx="7" cy="1.500" r="1.300"/><circle cx="12.500" cy="1.500" r="1.300"/></svg>
  <!-- rotate -->
  <div class="a" style="left:491px;top:405px;width:18.800px;height:18.800px;border-radius:50%;background:#fff;border:1px solid #c9ccd1;box-shadow:0 1px 2px rgba(0,0,0,.08)"></div>
  <svg style="left:495px;top:409.500px" width="10.500" height="10.500" viewBox="0 0 10 10" fill="none" stroke="#0d1216" stroke-width="1.200" stroke-linecap="round" stroke-linejoin="round"><path d="M3.700 8.700C.9 7 .9 3 3.300 1.500M6.300 1.300C9.100 3 9.100 7 6.700 8.500"/><path d="M1.900 1.100 4.300 1 4 3.300zM8.100 8.900 5.700 9 6 6.700z" fill="#0d1216" stroke-width=".6"/></svg>
  <!-- comment btn -->
  <div class="a" style="left:619px;top:141.600px;width:30px;height:30px;border-radius:50%;background:#fff;box-shadow:0 1px 6px rgba(64,87,109,.25)"></div>
  <svg style="left:626px;top:149px" width="17" height="16" viewBox="0 0 17 16" fill="none" stroke="#0d1216" stroke-width="1.300" stroke-linecap="round" stroke-linejoin="round"><path d="M9.500 2.200H7.500A5.400 5.400 0 0 0 5.300 12.500L6 14.200 8.300 12.800A5.800 5.800 0 0 0 14.200 7.500"/><path d="M13.300 .8V5.200M11.100 3H15.500"/></svg>
  <!-- magic -->
  <div class="a" style="left:906.500px;top:408.400px;width:32px;height:32px;border-radius:50%;background:linear-gradient(120deg,#03b5cf,#3a66e0 55%,#6d2fe6);box-shadow:0 1px 5px rgba(64,87,109,.2)"></div>
  <div class="a" style="left:908px;top:409.900px;width:29px;height:29px;border-radius:50%;background:#fff"></div>
  <svg style="left:912.800px;top:414.300px" width="19" height="19" viewBox="0 0 17 17"><defs><linearGradient id="mg" x1="0" y1="0" x2="1" y2="1"><stop offset="0" stop-color="#2a8be6"/><stop offset="1" stop-color="#5b3fe0"/></linearGradient></defs><path d="M9.200 3.500C9.800 7 11 8.200 14.500 8.800 11 9.400 9.800 10.600 9.200 14.100 8.600 10.600 7.400 9.400 3.900 8.800 7.400 8.200 8.600 7 9.200 3.500z" fill="url(#mg)"/><path d="M4.300 1.300C4.500 2.700 5 3.200 6.400 3.400 5 3.600 4.500 4.100 4.300 5.500 4.100 4.100 3.600 3.600 2.200 3.400 3.600 3.200 4.100 2.700 4.300 1.300z" fill="#2a8be6"/><path d="M13.800 2.200C13.950 3.100 14.300 3.450 15.200 3.600 14.300 3.750 13.950 4.100 13.800 5 13.650 4.100 13.300 3.750 12.400 3.600 13.300 3.450 13.650 3.100 13.800 2.200z" fill="#3f6fe3"/><circle cx="4.300" cy="12.800" r="1" fill="#4a55e2"/></svg>
</div>

<div class="a" style="left:323px;top:519.500px;width:940px;height:17.500px;background:#f1f1f1"></div>
<div class="a" style="left:1263px;top:77px;width:15px;height:442.500px;background:#f1f1f1"></div>
<div class="a" style="left:1264.500px;top:99px;width:13px;height:88.500px;background:#c1c1c1"></div>
<div class="a" style="left:1263px;top:519.500px;width:15px;height:17.500px;background:#dcdcdc"></div>
<svg style="left:1267.500px;top:85px" width="8" height="4.500" viewBox="0 0 9 5"><path d="M0 5 4.500 0 9 5z" fill="#2a2a2a"/></svg>
<svg style="left:1266.500px;top:508.500px" width="8" height="4.500" viewBox="0 0 9 5"><path d="M0 0 4.500 5 9 0z" fill="#2a2a2a"/></svg>
<svg style="left:329px;top:524px" width="5" height="9" viewBox="0 0 5 9"><path d="M5 0 0 4.500 5 9z" fill="#a3a3a3"/></svg>
<svg style="left:1252px;top:524px" width="5" height="9" viewBox="0 0 5 9"><path d="M0 0 5 4.500 0 9z" fill="#a3a3a3"/></svg>
<div id="foot" class="a">
  <svg style="left:449px;top:-10.500px" width="62" height="11.500" viewBox="0 0 62 11.500"><path d="M0 11.500C9 11.500 10 1 19 1H43C52 1 53 11.500 62 11.500z" fill="#fff"/></svg>
  <svg style="left:475px;top:-6px" width="7" height="5" viewBox="0 0 7 5" fill="none" stroke="#0d1216" stroke-width="1.300" stroke-linecap="round" stroke-linejoin="round"><path d="M.8 4 3.500 1.200 6.200 4"/></svg>
  <svg style="left:11px;top:9px" width="15" height="12" viewBox="0 0 15 12" fill="none" stroke="#0d1216" stroke-width="1.300" stroke-linecap="round" stroke-linejoin="round"><path d="M1 1.200H10.500M1 4.600H7M1 8H4"/><path d="M5.800 11 6.600 8.400 12 3a1.100 1.100 0 0 1 1.700 1.600L8.300 10z" stroke-width="1.100"/></svg>
  <div class="t ser" style="left:30px;top:7px;font-size:10.3px;font-weight:700">참고</div>
  <div class="t sans" style="left:582px;top:6.500px;font-size:11px;font-weight:700">1/4 페이지</div>
  <div class="a" style="left:644px;top:6px;width:1px;height:16px;background:#e1e3e6"></div>
  <div class="a" style="left:656px;top:14px;width:150px;height:1px;background:#d5d8dc"></div>
  <div class="a" style="left:656px;top:14px;width:76px;height:1px;background:#8d9196"></div>
  <div class="a" style="left:729px;top:10px;width:9px;height:9px;border-radius:50%;background:#0d1216"></div>
  <div class="t sans" style="left:826px;top:6.500px;font-size:10.4px;font-weight:700">75%</div>
  <svg style="left:872px;top:8px" width="14" height="13" viewBox="0 0 14 13" fill="none" stroke="#0d1216" stroke-width="1.300"><rect x=".8" y=".8" width="4.800" height="4.300" rx="1.200"/><rect x="8.400" y=".8" width="4.800" height="4.300" rx="1.200"/><rect x=".8" y="7.900" width="4.800" height="4.300" rx="1.200"/><rect x="8.400" y="7.900" width="4.800" height="4.300" rx="1.200"/></svg>
  <svg style="left:902px;top:8px" width="14" height="13" viewBox="0 0 14 13" fill="none" stroke="#0d1216" stroke-width="1.300" stroke-linecap="round" stroke-linejoin="round"><path d="M8.500 1H13V5.300M13 1 8.300 5.500M5.500 12H1V7.700M1 12 5.700 7.500"/></svg>
  <svg style="left:931px;top:7px" width="16" height="16" viewBox="0 0 16 16" fill="none" stroke="#0d1216" stroke-width="1.300"><circle cx="8" cy="8" r="7"/><path d="M5.900 6.300A2.100 2.100 0 1 1 8 8.500V9.600" stroke-linecap="round"/><circle cx="8" cy="11.700" r=".9" fill="#0d1216" stroke="none"/></svg>
</div>

<div class="a" style="left:0;top:0;width:1280px;height:2px;background:#000"></div>
<div class="a" style="left:0;top:0;width:2px;height:563px;background:#000"></div>
<div class="a" style="left:0;top:561px;width:1280px;height:2px;background:#000"></div>
<div class="a" style="left:1278px;top:0;width:2px;height:563px;background:#000"></div>
</div>
</body>
</html>
